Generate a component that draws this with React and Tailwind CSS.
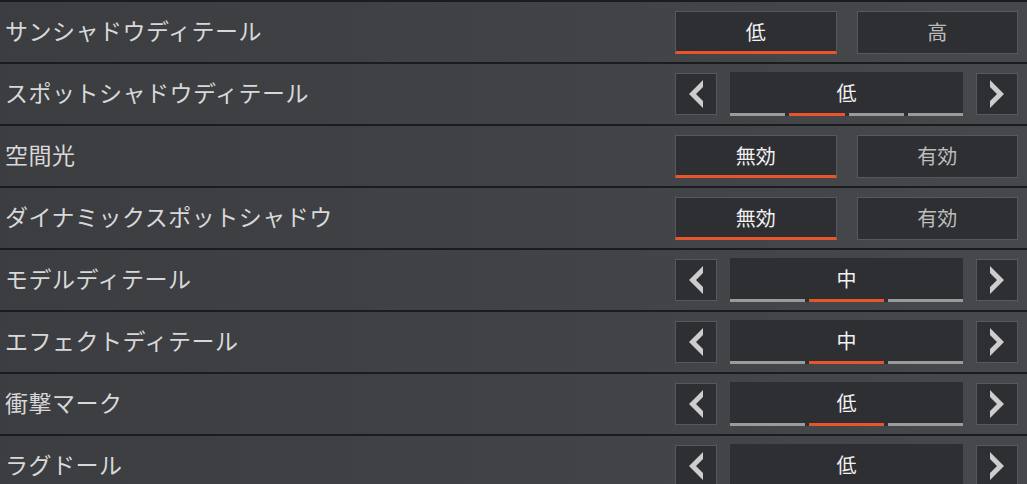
import React from 'react';

const rows = [
  { label: 'サンシャドウディテール', type: 'toggle', options: ['低', '高'], active: 0 },
  { label: 'スポットシャドウディテール', type: 'spin', value: '低', steps: 4, active: 1 },
  { label: '空間光', type: 'toggle', options: ['無効', '有効'], active: 0 },
  { label: 'ダイナミックスポットシャドウ', type: 'toggle', options: ['無効', '有効'], active: 0 },
  { label: 'モデルディテール', type: 'spin', value: '中', steps: 3, active: 1 },
  { label: 'エフェクトディテール', type: 'spin', value: '中', steps: 3, active: 1 },
  { label: '衝撃マーク', type: 'spin', value: '低', steps: 3, active: 1 },
  { label: 'ラグドール', type: 'spin', value: '低', steps: 3, active: 1 },
];

function Chevron({ dir }) {
  const pts = dir === 'left'
    ? '14,7 14,14 7,21 14,28 14,35 0,21'
    : '0,7 0,14 7,21 0,28 0,35 14,21';
  return (
    <svg width="14" height="42" viewBox="0 0 14 42" className="block">
      <polygon points={pts} fill="#cdcdcd" />
    </svg>
  );
}

function ArrowBox({ dir }) {
  return (
    <div className="w-[42px] h-[42px] flex items-center justify-center bg-[#2e2f33] border border-[#55585c]">
      <Chevron dir={dir} />
    </div>
  );
}

function Toggle({ options, active }) {
  return (
    <div className="flex gap-[20px] w-[343px]">
      {options.map((o, i) => (
        <div
          key={o}
          className={`flex-1 h-[43px] flex items-center justify-center bg-[#2e2f33] border border-[#55585c] text-[20px] ${
            i === active ? 'text-[#f2f2f2] border-b-[3px] border-b-[#e8552b] pt-[1px]' : 'text-[#bdbdbd] h-[42px]'
          }`}
        >
          {o}
        </div>
      ))}
    </div>
  );
}

function Spinner({ value, steps, active }) {
  const segs = Array.from({ length: steps });
  return (
    <div className="flex items-center gap-[13px] w-[343px]">
      <ArrowBox dir="left" />
      <div className="flex-1 h-[44px] bg-[#2e2f33] flex flex-col">
        <div className="flex-1 flex items-center justify-center text-[20px] text-[#f2f2f2]">{value}</div>
        <div className="flex gap-[4px] h-[3px]">
          {segs.map((_, i) => (
            <div key={i} className={`flex-1 ${i === active ? 'bg-[#e8552b]' : 'bg-[#9b9b9b]'}`} />
          ))}
        </div>
      </div>
      <ArrowBox dir="right" />
    </div>
  );
}

export default function App() {
  return (
    <div
      className="w-[1027px] h-[484px] overflow-hidden bg-[#1b1c1e]"
      style={{ fontFamily: '"Noto Sans CJK JP", "Noto Sans", sans-serif' }}
    >
      {rows.map((r) => (
        <div
          key={r.label}
          className="h-[62px] border-t-2 border-[#1b1c1e] bg-gradient-to-r from-[#3b3d41] via-[#404246] to-[#46484c] flex items-center justify-between pl-[5px] pr-[9px]"
        >
          <span className="text-[23px] text-[#d8d8d8] tracking-[0.5px] -mt-[3px]">{r.label}</span>
          {r.type === 'toggle' ? (
            <Toggle options={r.options} active={r.active} />
          ) : (
            <Spinner value={r.value} steps={r.steps} active={r.active} />
          )}
        </div>
      ))}
    </div>
  );
}
